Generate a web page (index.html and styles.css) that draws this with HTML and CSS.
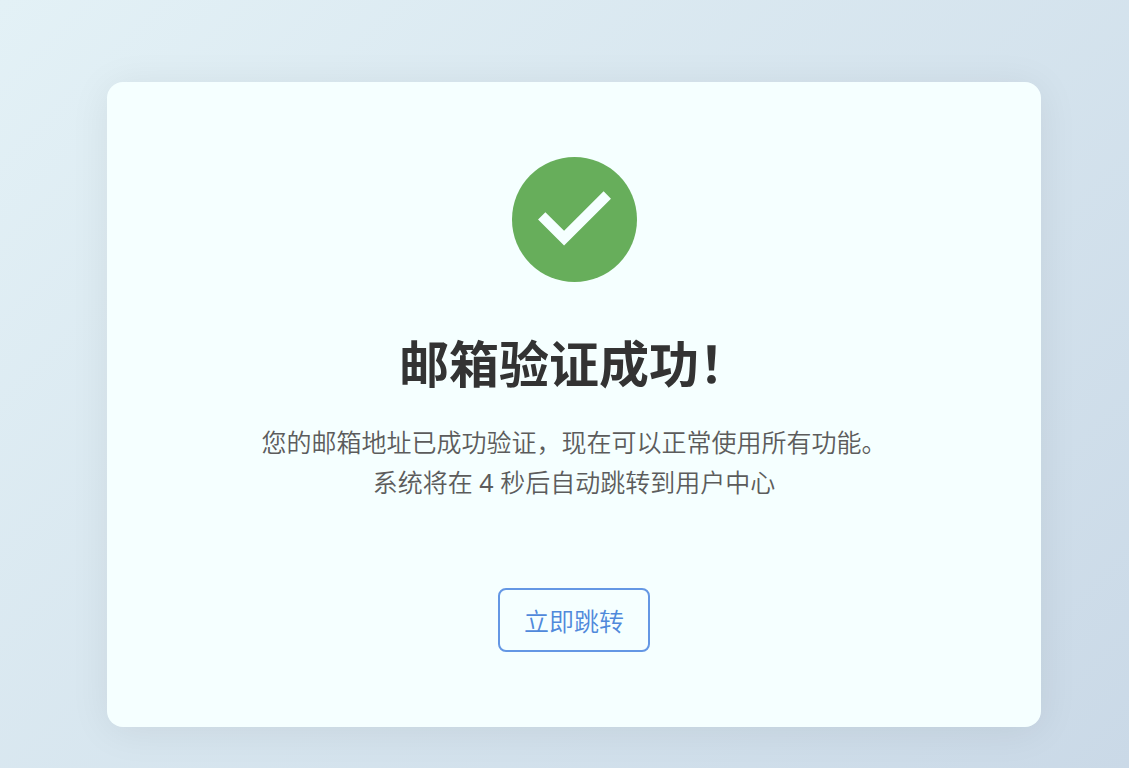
FILE: index.html
```html
<!DOCTYPE html>
<html lang="zh-CN">
<head>
    <meta charset="UTF-8">
    <meta name="viewport" content="width=device-width, initial-scale=1.0">
    <title>邮箱验证成功</title>
    <link rel="stylesheet" href="styles.css">
</head>
<body>
    <main class="card">
        <svg class="icon" viewBox="0 0 24 24" aria-hidden="true">
            <circle cx="12" cy="12" r="12" fill="#67ae5b"/>
            <path d="M10 17l-5-5 1.41-1.41L10 14.17l7.59-7.59L19 8z" fill="#f5ffff"/>
        </svg>
        <h1 class="title">邮箱验证成功！</h1>
        <p class="message">您的邮箱地址已成功验证，现在可以正常使用所有功能。<br>系统将在 <span class="countdown">4</span> 秒后自动跳转到用户中心</p>
        <button type="button" class="jump-button">立即跳转</button>
    </main>
</body>
</html>
```

FILE: styles.css
```css
* {
    box-sizing: border-box;
}

body {
    min-height: 100vh;
    margin: 0;
    padding: 82px 88px 41px 107px;
    font-family: "Noto Sans", "Noto Sans CJK SC", sans-serif;
    background: linear-gradient(135deg, #e3f1f6, #cad9e7);
}

.card {
    display: flex;
    flex-direction: column;
    align-items: center;
    padding: 75px 50px;
    text-align: center;
    background-color: #f5ffff;
    border-radius: 16px;
    box-shadow: 0 4px 40px rgba(0, 0, 0, 0.07);
}

.icon {
    width: 125px;
    height: 125px;
}

.title {
    margin: 50px 0 25px;
    font-size: 50px;
    line-height: 65px;
    color: #333;
}

.message {
    margin: 0 0 86px;
    font-size: 25px;
    font-weight: 350;
    line-height: 40px;
    color: #5c5c5c;
}

.countdown {
    font-weight: 400;
}

.jump-button {
    padding: 0 24px;
    height: 64px;
    font-family: inherit;
    font-size: 25px;
    font-weight: 350;
    color: #5089db;
    background: none;
    border: 2px solid #6497e4;
    border-radius: 8px;
    cursor: pointer;
}
```
